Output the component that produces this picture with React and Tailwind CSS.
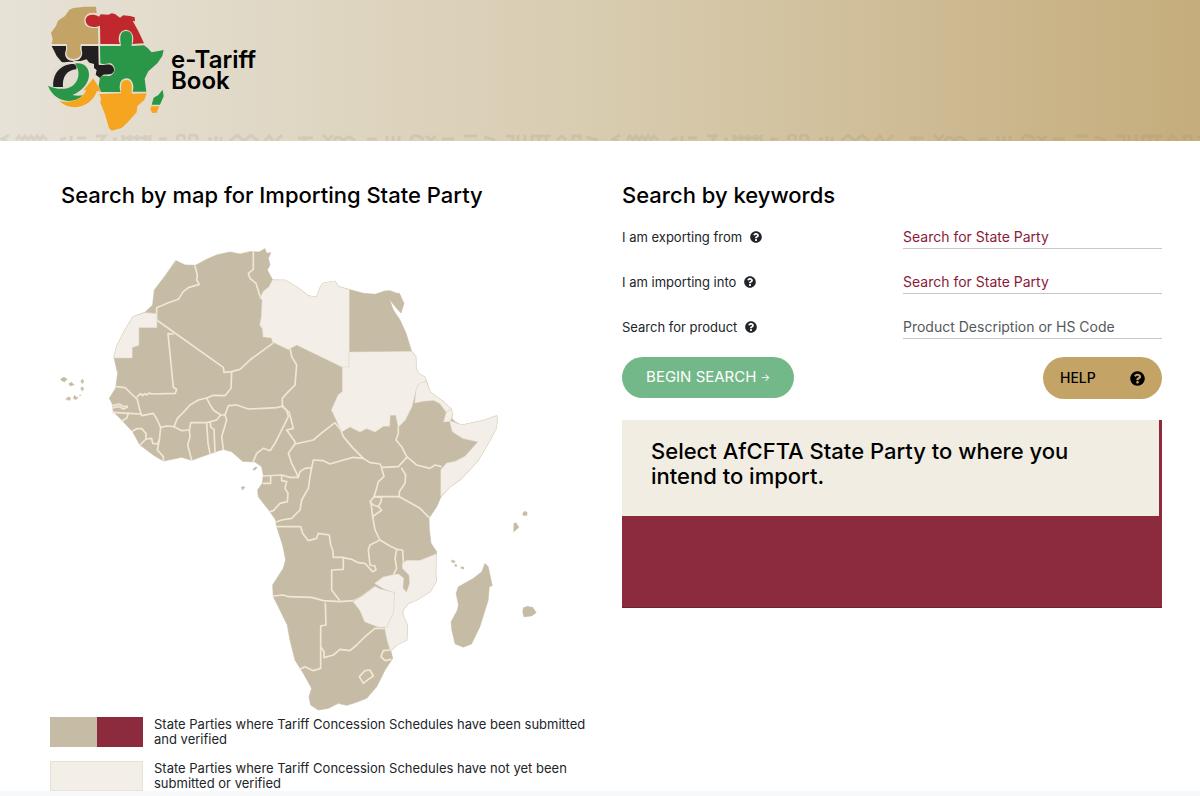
import React from 'react';
import { FaQuestionCircle } from 'react-icons/fa';

const continent =
  '378,62 405,75 437,76 470,58 500,45 540,36 570,42 600,35 627,36 645,26 650,40 662,38 655,55 660,75 652,90 668,120 705,121 745,145 775,168 800,172 812,140 820,130 855,124 865,140 895,148 940,160 975,163 1005,153 1020,152 1040,160 1048,160 1062,190 1053,219 1040,205 1018,178 1030,210 1050,240 1068,280 1085,335 1097,350 1098,385 1105,400 1125,412 1130,425 1140,455 1165,475 1180,485 1200,505 1208,520 1205,535 1215,545 1235,556 1270,548 1300,542 1340,528 1342,535 1338,565 1320,600 1285,660 1235,715 1200,740 1173,770 1160,800 1137,835 1138,870 1143,910 1160,935 1157,960 1157,1000 1158,1025 1140,1055 1100,1080 1075,1090 1058,1110 1058,1125 1072,1155 1070,1200 1040,1215 1022,1232 1028,1255 1005,1290 980,1340 950,1375 915,1388 890,1396 865,1390 835,1405 805,1410 782,1395 777,1370 785,1345 760,1300 735,1260 720,1200 712,1155 685,1100 670,1070 668,1035 700,985 707,960 698,915 680,860 677,840 660,815 625,770 623,750 637,730 640,705 635,680 615,666 578,664 545,635 520,628 495,636 455,650 425,661 395,652 340,663 310,645 270,615 248,575 215,540 190,515 186,490 178,475 197,445 203,400 192,353 200,320 225,270 250,230 285,217 308,195 313,150 345,108';

const borders = [
  '435,78 442,105 440,120 448,133 415,143 400,155 385,178 355,188 320,203 320,240',
  '320,240 520,382 522,397 545,395 570,388 600,360 668,310',
  '370,282 354,281 370,442 380,448 376,460 305,462 298,459 290,465 284,461 278,467 272,461 262,470',
  '198,440 225,443 245,462 262,478 268,505 275,527 310,520 322,540 332,562',
  '188,497 208,492 220,500 232,498',
  '188,504 206,499 220,507 232,502',
  '190,517 235,520 272,522',
  '235,520 230,535 215,543',
  '248,573 260,566 275,566 288,580 288,597 270,615',
  '288,597 305,595 308,610 322,612 328,600',
  '332,562 328,600 322,630 340,650 340,663',
  '332,562 350,558 372,560 395,572 418,570',
  '372,560 382,535 405,512 420,495 445,480 470,474 490,466 525,467 543,445 545,395',
  '470,474 478,490 490,510 512,525 525,525',
  '512,525 500,540 470,548 422,548 418,570 420,590 413,615 425,661',
  '470,548 474,610 480,640',
  '480,546 483,562 492,568 495,637',
  '525,525 530,540 515,590 520,628',
  '525,525 535,497 560,495 595,507 640,505 680,503 700,498',
  '610,38 610,88 595,100 600,115 618,130 632,175',
  '720,322 725,350 740,375 735,435 715,455 697,475 697,498 710,510 715,530 690,580 675,610 660,632 640,625 620,640 610,664',
  '697,500 718,518 730,565 710,570 735,605 735,612',
  '735,612 790,600 820,575 855,548 872,570 880,590 910,625 940,655',
  '735,612 715,640 725,670 740,700 745,712',
  '745,712 750,695 765,685 785,683 790,660 820,662 840,672 880,660 910,652 940,655',
  '940,655 960,668 990,672 995,682 1045,680 1070,653',
  '1045,560 1045,580 1038,600 1055,620 1070,650 1100,675 1140,685 1155,675 1173,680',
  '1055,685 1067,705 1065,730 1048,755 1048,770',
  '995,685 1002,710 985,725 980,745 972,770 1048,770 1110,805 1137,832',
  '972,770 995,772 993,785 985,800 970,795 960,785 972,770',
  '963,790 968,830 995,810 985,800',
  '968,830 975,870 990,900 1020,918 1040,928 1058,930 1060,965',
  '990,900 960,915 955,930 960,975 975,978 978,990 968,995 945,970 925,968 905,958 880,953',
  '1040,928 1035,955 1040,985 1030,1005',
  '680,860 752,860 758,880 775,902 800,895 805,880 838,885 842,915 848,930 850,952 880,952 880,988 845,990 845,1050 868,1080',
  '670,1068 700,1065 715,1070 785,1072 820,1082 870,1085 910,1082 935,1070 970,1045',
  '826,1090 828,1155 812,1158 812,1285 790,1292 765,1280 750,1288',
  '812,1220 822,1235 822,1253 850,1245 870,1228 900,1232 920,1215 945,1190 975,1165 1005,1165',
  '785,683 780,710 775,745 755,780 750,810 725,835 695,840 680,845',
  '640,708 695,705 720,712 745,712',
  '640,730 662,730 662,708',
  '695,708 695,722 710,725 705,745 714,760 712,785 690,790 670,812 660,815',
  '1020,1230 1000,1232 993,1250 1005,1262 1022,1258',
  '928,1310 945,1292 960,1290 970,1308 950,1322 940,1330 928,1310'
];

// Countries without a verified schedule
const pending = [
  { name: 'Western Sahara', points: '320,222 320,262 266,262 266,315 246,322 246,353 192,353 200,320 225,270 250,230 285,219' },
  { name: 'Libya', points: '668,121 705,121 745,145 775,168 800,172 812,140 820,130 855,124 865,140 897,150 897,382 880,382 740,314 715,328 668,305 665,293 640,290 638,265 630,255 635,230 637,180 632,172 640,155 658,140' },
  { name: 'Sudan', points: '898,337 1085,335 1097,350 1098,385 1105,400 1125,412 1128,424 1105,432 1095,460 1085,500 1065,540 1045,560 1038,525 1020,525 1018,558 1000,558 975,575 950,565 930,575 900,560 875,575 862,545 845,510 865,465 878,455 878,382 898,382' },
  { name: 'Eritrea', points: '1128,426 1140,455 1165,475 1180,485 1204,508 1190,517 1170,490 1150,480 1120,483 1095,488 1100,445 1110,430' },
  { name: 'Djibouti', points: '1190,517 1204,508 1208,522 1200,543 1182,545' },
  { name: 'Somalia', points: '1200,543 1235,556 1270,548 1300,542 1340,528 1342,535 1338,565 1320,600 1285,660 1235,715 1200,740 1173,768 1173,690 1190,670 1215,665 1245,650 1285,605 1240,595 1208,575' },
  { name: 'Mozambique', points: '1158,943 1110,962 1070,962 1058,970 1058,985 1078,1005 1080,1030 1070,1058 1058,1045 1060,1015 1045,1003 1030,1005 1000,1012 975,1030 1000,1045 1032,1058 1028,1110 1012,1150 1005,1165 1012,1200 1022,1232 1040,1215 1070,1200 1072,1155 1058,1125 1058,1110 1075,1090 1100,1080 1140,1055 1158,1025 1157,1000' },
  { name: 'Zimbabwe', points: '975,1040 990,1048 1032,1058 1030,1115 1010,1160 985,1160 945,1145 930,1110 910,1085 935,1070' }
];

const islands = [
  '1305,970 1315,980 1327,1037 1318,1040 1315,1080 1290,1160 1265,1212 1240,1222 1215,1212 1205,1170 1203,1145 1222,1110 1225,1095 1218,1060 1225,1040 1270,1015 1295,995',
  '1420,1103 1432,1099 1448,1102 1459,1118 1445,1128 1422,1131 1418,1118',
  '1392,850 1398,848 1407,862 1391,876',
  '1419,818 1425,813 1432,818 1430,827 1419,826',
  '1204,960 1214,962 1216,967 1207,968',
  '1214,973 1220,974 1220,980 1215,979',
  '1233,980 1242,982 1242,987 1234,986',
  '33,416 42,411 52,418 43,426 33,421',
  '56,431 64,427 73,434 61,438',
  '92,424 97,417 102,423 98,431',
  '92,444 97,440 102,447 97,453',
  '70,475 73,466 79,471 85,473 77,479',
  '47,478 54,471 62,473 60,481',
  '88,466 92,464 92,467',
  '608,688 616,681 622,682 615,691',
  '574,742 580,739 585,742 578,750'
];

const legend = [
  {
    colors: ['bg-[#c6bba4]', 'bg-[#8b2b3d]'],
    border: '',
    text: 'State Parties where Tariff Concession Schedules have been submitted and verified'
  },
  {
    colors: ['bg-[#f3eee6]'],
    border: 'border border-[#e5e2dc]',
    text: 'State Parties where Tariff Concession Schedules have not yet been submitted or verified'
  }
];

const fields = [
  { id: 'exporting', label: 'I am exporting from', placeholder: 'Search for State Party', color: 'placeholder:text-[#8b1a38]' },
  { id: 'importing', label: 'I am importing into', placeholder: 'Search for State Party', color: 'placeholder:text-[#8b1a38]' },
  { id: 'product', label: 'Search for product', placeholder: 'Product Description or HS Code', color: 'placeholder:text-[#55595c]' }
];

function Logo() {
  return (
    <svg viewBox="18 0 360 399" className="w-[120px] h-[133px] shrink-0" aria-hidden="true">
      <path fill="#c4a466" d="M168 20 170 40C148 34 133 46 133 62 133 79 150 87 174 83L175 132H122L120 148C130 164 118 177 100 177 82 177 74 164 82 148L80 132H35L38 118 33 98 48 78 54 62 75 48 88 29 100 24 135 20Z" />
      <path fill="#c0282d" d="M182 43 205 44 215 40 225 42 240 53 250 46 270 48 284 52 285 64 278 62 296 95 312 130 277 132C283 120 282 91 258 89 234 91 233 120 240 132H181L180 77C158 87 137 78 137 61 137 45 158 39 177 50Z" />
      <path fill="#231f20" d="M35 138H78V149C69 168 82 183 100 183 120 183 131 168 125 149V138H175L176 194C190 199 205 188 217 197 226 208 223 221 208 223 196 225 190 218 180 234L167 224 170 210 162 204V192L148 188 140 178 122 183 104 182 88 190 65 186 50 168Z" />
      <path fill="#2a9648" d="M180 138H243C243 130 233 93 258 93 284 93 275 128 275 138L312 136 322 143 335 157 371 150 367 168 352 190 325 214 314 236 319 275H278C284 259 278 235 259 235 238 235 236 262 242 276H183L176 258 180 232C190 224 200 230 211 227 228 219 228 198 213 190 200 188 190 196 181 190Z" />
      <path fill="#f6a521" d="M178 282 243 280C246 274 236 240 259 240 282 240 273 272 276 281L320 280 313 300 292 318 290 337 264 366 245 384 215 392 207 384 195 343 181 308 183 297Z" />
      <circle cx="90" cy="243" r="58" fill="#e3ddd0" />
      <path fill="#231f20" d="M40 261C36 222 62 191 102 192 108 196 111 201 109 208 80 210 66 232 69 261Z" />
      <path fill="#2a9648" d="M105 191C125 185 147 198 147 224 147 250 125 274 97 285 108 288 118 288 128 286 104 313 44 310 24 257 45 268 78 271 97 258 119 242 121 211 105 191Z" />
      <path fill="#f6a521" d="M58 303C88 309 123 304 139 271H131L160 235 184 275 171 273C155 321 94 338 58 303Z" />
      <path fill="#2a9648" d="M368 269 371 289 360 314H335L341 293 355 285Z" />
      <path fill="#f6a521" d="M334 319H358L350 338 337 339 331 329Z" />
    </svg>
  );
}

function GlyphBand() {
  return (
    <svg className="absolute bottom-0 left-0 w-full h-[7px]" aria-hidden="true">
      <defs>
        <pattern id="glyphs" width="611" height="7" patternUnits="userSpaceOnUse">
          <path
            d="M9 1 2 5 7 7M16 6l3-4 3 4 3-4 3 4 3-4 3 4 3-4 3 4 3-4 4 4M60 6l6-2M71 2v5M77 4h9M96 2h9l-4 5M113 5h4M123 1v6M130 1v6M137 1v6M145 1v6M150 1v6M123 4h28M159 5h8M178 6q-2-5 3-5t3 5M190 6q-2-5 3-5t4 5M208 5h4M216 2v5M221 3v4M230 7l7-6 7 6 7-6 7 6M264 7l5-5 4 5M276 7l6-6M298 4h15M304 2v5M323 1l5 5 5-5M334 7q3-8 10 0q4-8 11 0M367 5h10M387 2v5M393 2v5M399 2v5M411 6q1-6 7-4t4 4M426 2l5 4 5-4M442 5h12M464 2h13M484 3l11 3M506 2h7v5M518 1v6M525 1v6M531 2h20M532 2v5M539 2v5M546 2v5M557 6l5-4 4 4M573 6V2h7v4M586 3l12 3"
            fill="none"
            stroke="#8d8468"
            strokeOpacity=".16"
            strokeWidth="3"
          />
        </pattern>
      </defs>
      <rect width="100%" height="7" fill="url(#glyphs)" />
    </svg>
  );
}

function AfricaMap() {
  return (
    <svg
      viewBox="0 0 1500 1428"
      className="w-full max-w-[500px] h-auto"
      role="img"
      aria-label="Map of Africa"
      strokeLinejoin="round"
      strokeLinecap="round"
    >
      <polygon points={continent} fill="#c6bba4" stroke="#c6bba4" strokeWidth="2" />
      {borders.map((points) => (
        <polyline key={points} points={points} fill="none" stroke="#f0e7d5" strokeWidth="5" />
      ))}
      {pending.map((country) => (
        <g key={country.name}>
          <polygon points={country.points} fill="#f3efe8" stroke="#d8cdb9" strokeWidth="4" />
          <polygon points={country.points} fill="#f3efe8" stroke="#f3efe8" strokeWidth="1" />
        </g>
      ))}
      {islands.map((points) => (
        <polygon key={points} points={points} fill="#c6bba4" stroke="#c6bba4" strokeWidth="1" />
      ))}
    </svg>
  );
}

export default function App() {
  return (
    <div className="bg-white text-black font-['Inter','Open_Sans',sans-serif]">
      <header className="relative flex gap-[5px] h-[141px] pl-[46px] bg-linear-to-r from-[#e7e2d7] via-[#d8ccb0] to-[#c5ad7c]">
        <Logo />
        <div className="mt-[49px] text-2xl leading-[21px] font-semibold">
          e-Tariff
          <br />
          Book
        </div>
        <GlyphBand />
      </header>

      <main className="grid grid-cols-2 gap-8 pl-[50px] pr-[38px] pt-[38px]">
        <section>
          <h2 className="pl-[11px] mb-[29px] text-[22px] leading-8 font-medium">
            Search by map for Importing State Party
          </h2>
          <AfricaMap />

          <ul className="flex flex-col gap-[14px] mt-px">
            {legend.map((item) => (
              <li key={item.text} className="flex gap-[11px]">
                <span className={`flex w-[93px] h-[30px] shrink-0 ${item.border}`}>
                  {item.colors.map((color) => (
                    <span key={color} className={`flex-1 ${color}`} />
                  ))}
                </span>
                <span className="text-[13px] leading-[15px] text-[#212529]">{item.text}</span>
              </li>
            ))}
          </ul>
        </section>

        <section>
          <h2 className="text-[22px] leading-8 font-medium">Search by keywords</h2>

          <form>
            <div className="flex flex-col gap-[19px] mt-3">
              {fields.map((field) => (
                <div key={field.id} className="flex items-end justify-between">
                  <label htmlFor={field.id} className="flex items-center gap-2 pb-[2px] text-[13px] text-[#212529]">
                    {field.label}
                    <FaQuestionCircle className="size-3" />
                  </label>
                  <input
                    id={field.id}
                    type="text"
                    placeholder={field.placeholder}
                    className={`w-[259px] h-[26px] pt-[2px] text-sm border-b border-[#c9c6c6] outline-none ${field.color}`}
                  />
                </div>
              ))}
            </div>

            <div className="flex items-start justify-between mt-[18px]">
              <button type="button" className="flex items-center justify-center gap-1 w-[172px] h-[41px] rounded-full bg-[#73b888] text-white text-[15px]">
                BEGIN SEARCH <span className="text-[10px]">→</span>
              </button>
              <button type="button" className="flex items-center justify-between w-[119px] h-[42px] px-[17px] rounded-full bg-[#c4a466] text-sm font-medium">
                HELP
                <FaQuestionCircle className="size-[15px]" />
              </button>
            </div>
          </form>

          <div className="mt-[21px] bg-[#8b2b3d] border-b border-[#6f2331]">
            <div className="mr-[3px] h-[96px] px-[29px] pt-[19px] bg-[#f1ede2]">
              <p className="text-[22px] leading-[25px] font-medium">
                Select AfCFTA State Party to where you intend to import.
              </p>
            </div>
            <div className="h-[91px]" />
          </div>
        </section>
      </main>
      <div className="h-[5px] bg-[#f6f8fa]" />
    </div>
  );
}
